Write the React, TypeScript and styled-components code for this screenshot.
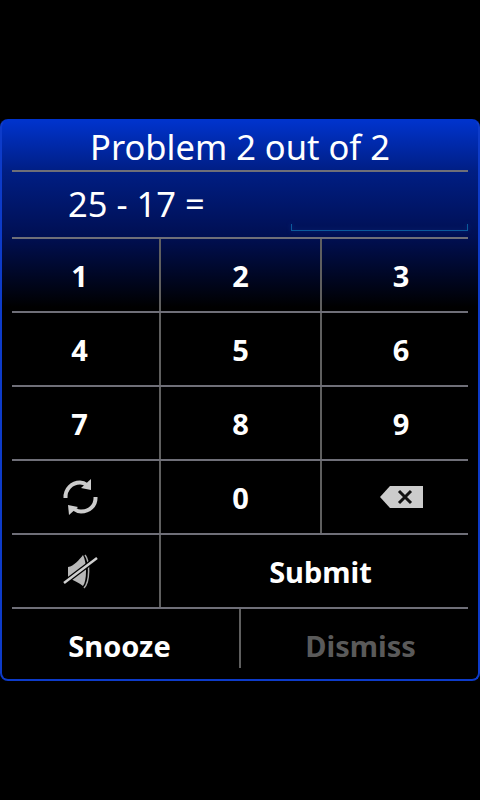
import React from 'react'
import styled, { createGlobalStyle } from 'styled-components'

const GlobalStyle = createGlobalStyle`
  html, body {
    margin: 0;
    height: 100%;
    background: #000;
  }
  body {
    font-family: "Noto Sans", "Open Sans", sans-serif;
  }
`
const Screen = styled.div`
  display: flex;
  align-items: center;
  height: 800px;
`
const Panel = styled.section`
  box-sizing: border-box;
  width: 480px;
  height: 562px;
  border: 2px solid #0d3bc9;
  border-top-color: #0033cc;
  border-radius: 8px;
  background: linear-gradient(180deg, #0033cc 0, #001e84 50px, #000f52 116px, #000 186px);
  color: #fff;
`
const Title = styled.h1`
  margin: 0;
  height: 49px;
  font-size: 34.5px;
  font-weight: 400;
  line-height: 52px;
  text-align: center;
`
const Rule = styled.div`
  height: 2px;
  margin: 0 10px;
  background: #6f6f78;
`
const Question = styled.div`
  display: flex;
  align-items: flex-start;
  justify-content: space-between;
  box-sizing: border-box;
  height: 65px;
  padding-left: 66px;
  padding-right: 10px;
`
const Expression = styled.span`
  font-size: 34.5px;
  line-height: 64px;
`
const AnswerField = styled.div`
  box-sizing: border-box;
  width: 177px;
  height: 7px;
  margin-top: 52px;
  border: 1px solid #0b5a9c;
  border-top: 0;
  filter: drop-shadow(0 0 2px #0a2f86);
`
const Row = styled.div`
  display: grid;
  grid-template-columns: ${(p: { $wide?: boolean }) => (p.$wide ? '159px 1fr' : '159px 161px 1fr')};
  height: 72px;
`
const Key = styled.button<{ $first?: boolean; $last?: boolean }>`
  display: flex;
  align-items: center;
  justify-content: center;
  padding: 0 ${(p) => (p.$first ? '2px' : '0')} 0 ${(p) => (p.$last ? '2px' : '0')};
  border: 0;
  border-right: ${(p) => (p.$last ? '0' : '2px solid #5f5f5f')};
  background: transparent;
  color: #fff;
  font-family: inherit;
  font-size: 29px;
  font-weight: 700;
`
const Footer = styled.div`
  display: flex;
  height: 72px;
`
const FooterButton = styled.button<{ $disabled?: boolean }>`
  flex: 1;
  padding: ${(p) => (p.$disabled ? '0 0 0 2px' : '0 2px 0 0')};
  border: 0;
  background: transparent;
  color: ${(p) => (p.$disabled ? '#5a5a5a' : '#fff')};
  font-family: inherit;
  font-size: 29px;
  font-weight: 700;
  line-height: 74px;
`
const FooterDivider = styled.div`
  flex: none;
  width: 2px;
  height: 59px;
  background: #5f5f5f;
`

const RefreshIcon = () => (
  <svg width="50" height="50" viewBox="0 0 50 50">
    <path d="M10.500 26 C10 17 17 10.500 25 10.500 C28 10.500 30 11.500 32 13" fill="none" stroke="#ccc" strokeWidth="4" />
    <polygon points="36,7 36,18 26,16" fill="#ccc" />
    <path d="M40.500 25 C41 34 34 39.500 26 39.500 C23 39.500 21 38.500 19 37" fill="none" stroke="#ccc" strokeWidth="4" />
    <polygon points="14,43 13,33 23,35" fill="#ccc" />
  </svg>
)

const BackspaceIcon = () => (
  <svg width="46" height="22" viewBox="-2 0 46 22">
    <polygon points="0,11 10,0 43,0 43,22 10,22" fill="#ccc" />
    <path d="M19 5 L31 17 M31 5 L19 17" stroke="#111" strokeWidth="3" fill="none" />
  </svg>
)

const MuteIcon = () => (
  <svg width="52" height="50" viewBox="-2 0 52 50">
    <path d="M12 21 C18 20 23 14 27 9 C29 13 30 19 30 25 C30 32 29 37 27 40 C23 37 18 34 12 32 Z" fill="#b8b8b8" />
    <path d="M29 9 C34 15 34 36 28 42" fill="none" stroke="#aaa" strokeWidth="1.500" />
    <path d="M8 37 L41 12" stroke="#000" strokeWidth="5" />
    <path d="M8 37 L41 12" stroke="#d0d0d0" strokeWidth="2.500" />
  </svg>
)

const rows = [
  ['1', '2', '3'],
  ['4', '5', '6'],
  ['7', '8', '9'],
]

export default function App() {
  return (
    <Screen>
      <GlobalStyle />
      <Panel>
        <Title>Problem 2 out of 2</Title>
        <Rule />
        <Question>
          <Expression>25 - 17 =</Expression>
          <AnswerField />
        </Question>
        <Rule />
        {rows.map((row) => (
          <React.Fragment key={row[0]}>
            <Row>
              {row.map((digit, i) => (
                <Key key={digit} $first={i === 0} $last={i === 2}>
                  {digit}
                </Key>
              ))}
            </Row>
            <Rule />
          </React.Fragment>
        ))}
        <Row>
          <Key $first>
            <RefreshIcon />
          </Key>
          <Key>0</Key>
          <Key $last>
            <BackspaceIcon />
          </Key>
        </Row>
        <Rule />
        <Row $wide>
          <Key $first>
            <MuteIcon />
          </Key>
          <Key $last>Submit</Key>
        </Row>
        <Rule />
        <Footer>
          <FooterButton>Snooze</FooterButton>
          <FooterDivider />
          <FooterButton $disabled>Dismiss</FooterButton>
        </Footer>
      </Panel>
    </Screen>
  )
}
